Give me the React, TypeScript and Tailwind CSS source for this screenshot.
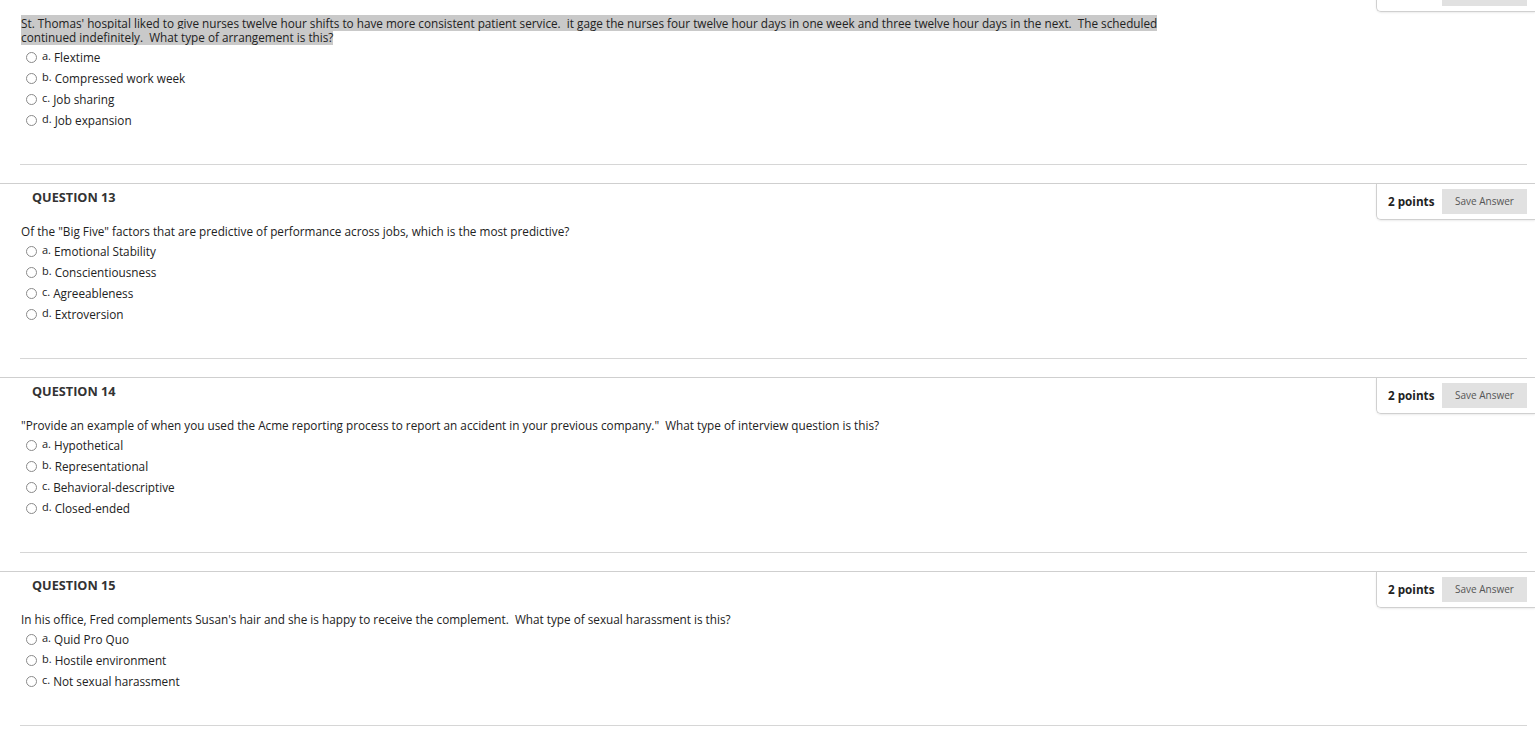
import React from "react";

type Q = {
  num: number;
  hideHeader?: boolean;
  text: React.ReactNode;
  options: [string, string][];
};

const questions: Q[] = [
  {
    num: 12,
    hideHeader: true,
    text: (
      <span className="bg-[#c9c9c9]">
        St. Thomas' hospital liked to give nurses twelve hour shifts to have more consistent patient service.&nbsp; it gage the nurses four twelve hour days in one week and three twelve hour days in the next.&nbsp; The scheduled
        <br />
        continued indefinitely.&nbsp; What type of arrangement is this?
      </span>
    ),
    options: [
      ["a.", "Flextime"],
      ["b.", "Compressed work week"],
      ["c.", "Job sharing"],
      ["d.", "Job expansion"],
    ],
  },
  {
    num: 13,
    text: 'Of the "Big Five" factors that are predictive of performance across jobs, which is the most predictive?',
    options: [
      ["a.", "Emotional Stability"],
      ["b.", "Conscientiousness"],
      ["c.", "Agreeableness"],
      ["d.", "Extroversion"],
    ],
  },
  {
    num: 14,
    text: '"Provide an example of when you used the Acme reporting process to report an accident in your previous company."  What type of interview question is this?',
    options: [
      ["a.", "Hypothetical"],
      ["b.", "Representational"],
      ["c.", "Behavioral-descriptive"],
      ["d.", "Closed-ended"],
    ],
  },
  {
    num: 15,
    text: "In his office, Fred complements Susan's hair and she is happy to receive the complement.  What type of sexual harassment is this?",
    options: [
      ["a.", "Quid Pro Quo"],
      ["b.", "Hostile environment"],
      ["c.", "Not sexual harassment"],
    ],
  },
];

function Block({ q }: { q: Q }) {
  return (
    <div className="flex flex-col border-t border-[#cfcfcf]">
      <div className="flex justify-between items-start h-[36px]">
        <div className="pl-[32px] pt-[4px] text-[12.7px] leading-[18px] font-bold text-[#333]">
          {q.hideHeader ? "" : `QUESTION ${q.num}`}
        </div>
        <div className="w-[159px] h-[36px] border-l border-b border-[#d0d0d0] rounded-bl-[5px] shadow-[0_1px_2px_rgba(0,0,0,0.08)] flex items-center justify-between pl-[11px] pr-[8px]">
          <span className="text-[11.7px] font-bold text-[#222]">
            {q.hideHeader ? "" : "2 points"}
          </span>
          <span className="w-[85px] h-[25px] bg-[#e1e1e1] flex items-center justify-center text-[10px] text-[#555]">
            {q.hideHeader ? "" : "Save Answer"}
          </span>
        </div>
      </div>
      <div className="mt-[4px] pl-[21px] text-[11.75px] leading-[14px] text-[#222] whitespace-pre-wrap">
        {q.text}
      </div>
      <div className="mt-[3px] flex flex-col">
        {q.options.map(([l, t]) => (
          <div key={l} className="h-[21px] flex items-center pl-[26px] text-[11.75px] text-[#222]">
            <span className="w-[11px] h-[11px] rounded-full border border-[#8a8a8a] bg-white mr-[5px]" />
            <span className="text-[11px] mr-[3px] relative top-[-1px]">{l}</span>
            <span>{t}</span>
          </div>
        ))}
      </div>
      <div className="mt-[33px] ml-[20px] mr-[8px] h-px bg-[#d6d6d6]" />
      <div className="h-[18px]" />
    </div>
  );
}

export default function App() {
  return (
    <div
      className="w-[1535px] h-[734px] overflow-hidden bg-white"
      style={{ fontFamily: '"Open Sans", "Noto Sans", sans-serif' }}
    >
      <div className="-mt-[25px] flex flex-col">
        {questions.map((q) => (
          <Block key={q.num} q={q} />
        ))}
      </div>
    </div>
  );
}
